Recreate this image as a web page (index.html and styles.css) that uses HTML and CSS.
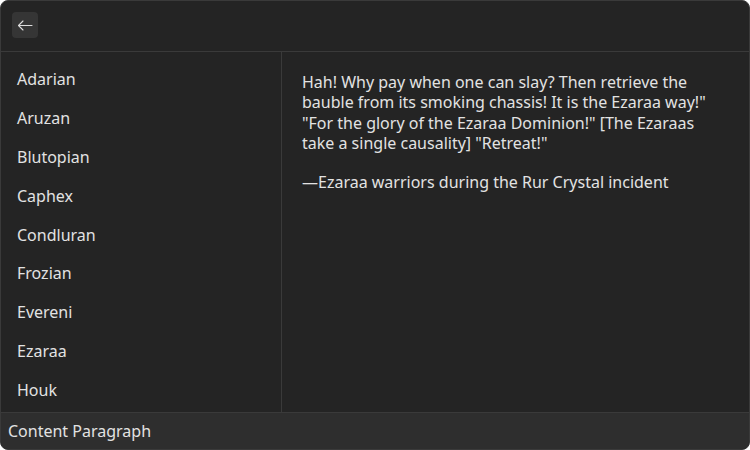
FILE: index.html
```html
<!DOCTYPE html>
<html>
<head>
<meta charset="utf-8">
<link rel="stylesheet" href="styles.css">
</head>
<body>
<div class="window">
  <header class="header">
    <button class="back" aria-label="Back">
      <svg width="16" height="16" viewBox="0 0 16 16" fill="none" stroke="#dcdcdc" stroke-width="1.1" stroke-linecap="round" stroke-linejoin="round">
        <path d="M15 8.5H1.5M6 4L1.5 8.5L6 13"/>
      </svg>
    </button>
  </header>
  <div class="main">
    <nav class="sidebar">
      <div class="item">Adarian</div>
      <div class="item">Aruzan</div>
      <div class="item">Blutopian</div>
      <div class="item">Caphex</div>
      <div class="item">Condluran</div>
      <div class="item">Frozian</div>
      <div class="item">Evereni</div>
      <div class="item">Ezaraa</div>
      <div class="item">Houk</div>
    </nav>
    <section class="content">
      <p>Hah! Why pay when one can slay? Then retrieve the bauble from its smoking chassis! It is the Ezaraa way!" "For the glory of the Ezaraa Dominion!" [The Ezaraas take a single causality] "Retreat!"</p>
      <p>—Ezaraa warriors during the Rur Crystal incident</p>
    </section>
  </div>
  <footer class="footer">Content Paragraph</footer>
</div>
</body>
</html>
```

FILE: styles.css
```css
html, body {
  margin: 0;
  padding: 0;
  background: #ffffff;
}
body {
  font-family: "Noto Sans", sans-serif;
  color: #e2e2e2;
}
.window {
  width: 750px;
  height: 450px;
  box-sizing: border-box;
  border: 1px solid #3a3a3a;
  border-radius: 8px;
  background: #242424;
  overflow: hidden;
  display: flex;
  flex-direction: column;
}
.header {
  height: 51px;
  flex: none;
  box-sizing: border-box;
  padding: 11px 11px;
  border-bottom: 1px solid #3a3a3a;
  display: flex;
  align-items: flex-start;
}
.back {
  width: 26px;
  height: 26px;
  border: none;
  border-radius: 4px;
  background: #353535;
  padding: 0;
  display: flex;
  align-items: center;
  justify-content: center;
}
.main {
  flex: 1;
  display: flex;
  min-height: 0;
}
.sidebar {
  width: 281px;
  box-sizing: border-box;
  border-right: 1px solid #3a3a3a;
  padding-top: 8px;
  display: flex;
  flex-direction: column;
}
.item {
  height: 38.9px;
  line-height: 38.9px;
  padding-left: 16px;
  font-size: 16px;
}
.content {
  flex: 1;
  padding: 20px 20px 0 20px;
  font-size: 16px;
  line-height: 20.4px;
}
.content p {
  margin: 0 0 18px 0;
}
.footer {
  height: 37px;
  flex: none;
  box-sizing: border-box;
  border-top: 1px solid #3a3a3a;
  background: #2e2e2e;
  padding-left: 7px;
  font-size: 16px;
  line-height: 36px;
}
```
